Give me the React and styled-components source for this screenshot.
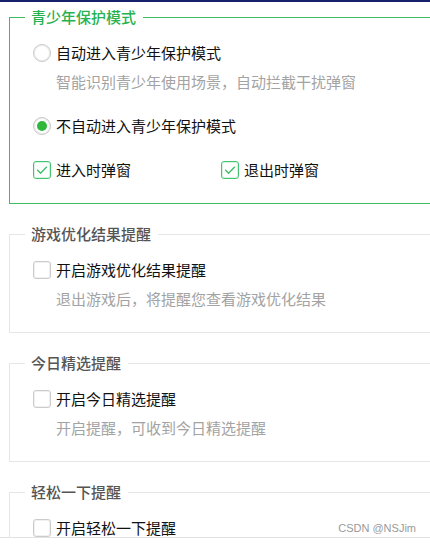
import styled, { createGlobalStyle } from "styled-components"

const Global = createGlobalStyle`
  html, body {
    margin: 0;
    padding: 0;
    background: #ffffff;
    overflow: hidden;
  }
  body {
    font-family: "Microsoft YaHei", "Noto Sans CJK SC", sans-serif;
  }
`

const Page = styled.div`
  position: relative;
  width: 430px;
  height: 538px;
  overflow: hidden;
  border-bottom: 1px solid #e2e2e2;
  border-top: 2px solid #17216b;
  box-sizing: border-box;
  background: #fff;
`

const Column = styled.div`
  padding: 5px 0 0 9px;
  display: flex;
  flex-direction: column;
  gap: 20px;
`

const Group = styled.fieldset`
  margin: 0;
  padding: 16px 0 23px 23px;
  border: 1px solid ${p => (p.$active ? "#3fba5f" : "#e6e6e6")};
  border-right: 0;
  min-width: 0;
`

const Legend = styled.legend`
  margin-left: -8px;
  padding: 0 7px 0 6px;
  font-size: 15px;
  line-height: 20px;
  font-weight: 500;
  color: ${p => (p.$active ? "#27b24f" : "#555555")};
`

const Row = styled.label`
  display: flex;
  align-items: center;
  gap: 5px;
  height: 20px;
  font-size: 15px;
  line-height: 20px;
  color: #111;
  margin-top: ${p => p.$gap || 0}px;
`

const Hint = styled.div`
  margin-top: 9px;
  padding-left: 23px;
  font-size: 15px;
  line-height: 20px;
  color: #a3a3a3;
`

const Pair = styled.div`
  display: grid;
  grid-template-columns: 188px auto;
  margin-top: 24px;
`

const Radio = styled.span`
  width: 18px;
  height: 18px;
  box-sizing: border-box;
  border-radius: 50%;
  border: 1px solid #c9c9c9;
  box-shadow: inset 0 0 0 1px #ececec;
  display: flex;
  align-items: center;
  justify-content: center;
  background: #fff;
  flex: none;
  &::after {
    content: "";
    width: 10px;
    height: 10px;
    border-radius: 50%;
    background: ${p => (p.$on ? "#2fb83a" : "transparent")};
  }
`

const Box = styled.span`
  width: 18px;
  height: 18px;
  box-sizing: border-box;
  border-radius: 3px;
  border: 1px solid ${p => (p.$on ? "#43c472" : "#cbcbcb")};
  box-shadow: inset 0 0 0 1px ${p => (p.$on ? "#d9f3e2" : "#f0f0f0")};
  display: flex;
  align-items: center;
  justify-content: center;
  background: #fff;
  flex: none;
`

const Mark = styled.span`
  position: absolute;
  right: 14px;
  bottom: 3px;
  font-family: "Liberation Sans", Arial, sans-serif;
  font-size: 11px;
  color: #9a9a9a;
`

function Check({ on }) {
  return (
    <Box $on={on}>
      {on && (
        <svg width="12" height="10" viewBox="0 0 12 10">
          <path d="M1.2 4.8 L4.6 8.2 L10.8 1.8" fill="none" stroke="#3fc06c" strokeWidth="1.4" />
        </svg>
      )}
    </Box>
  )
}

const reminders = [
  { title: "游戏优化结果提醒", label: "开启游戏优化结果提醒", hint: "退出游戏后，将提醒您查看游戏优化结果" },
  { title: "今日精选提醒", label: "开启今日精选提醒", hint: "开启提醒，可收到今日精选提醒" },
  { title: "轻松一下提醒", label: "开启轻松一下提醒" },
]

export default function App() {
  return (
    <Page>
      <Global />
      <Column>
        <Group $active>
          <Legend $active>青少年保护模式</Legend>
          <Row>
            <Radio />
            自动进入青少年保护模式
          </Row>
          <Hint>智能识别青少年使用场景，自动拦截干扰弹窗</Hint>
          <Row $gap={24}>
            <Radio $on />
            不自动进入青少年保护模式
          </Row>
          <Pair>
            <Row>
              <Check on />
              进入时弹窗
            </Row>
            <Row>
              <Check on />
              退出时弹窗
            </Row>
          </Pair>
        </Group>
        {reminders.map(r => (
          <Group key={r.title}>
            <Legend>{r.title}</Legend>
            <Row>
              <Check />
              {r.label}
            </Row>
            {r.hint && <Hint>{r.hint}</Hint>}
          </Group>
        ))}
      </Column>
      <Mark>CSDN @NSJim</Mark>
    </Page>
  )
}
